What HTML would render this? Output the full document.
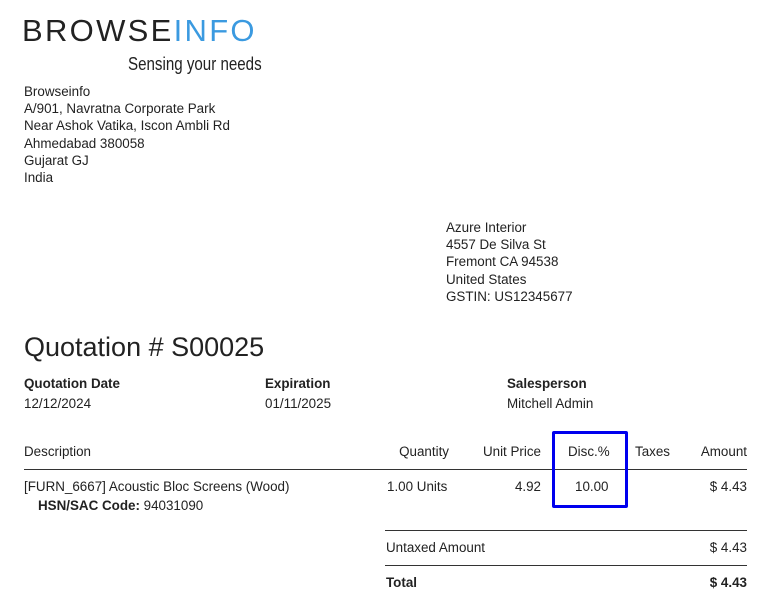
<!DOCTYPE html>
<html><head><meta charset="utf-8"><style>
body{margin:0;width:762px;height:608px;background:#fff;font-family:"Liberation Sans",sans-serif;color:#222;position:relative;overflow:hidden}
.a{position:absolute;white-space:nowrap;font-size:13.4px;line-height:17px}
.b{font-weight:bold}
.r{text-align:right}
.line{position:absolute;height:1px;background:#333}
</style></head><body>
<div class="a" style="left:22px;top:13px;font-size:31px;line-height:36px;letter-spacing:2.3px;color:#222">BROWSE<span style="color:#3b9ae0">INFO</span></div>
<div class="a" style="left:128px;top:54px;font-size:18px;line-height:20px;transform:scaleX(0.84);transform-origin:left">Sensing your needs</div>
<div class="a" style="left:24px;top:83px;line-height:17.2px">Browseinfo<br>A/901, Navratna Corporate Park<br>Near Ashok Vatika, Iscon Ambli Rd<br>Ahmedabad 380058<br>Gujarat GJ<br>India</div>
<div class="a" style="left:446px;top:219px;line-height:17.2px">Azure Interior<br>4557 De Silva St<br>Fremont CA 94538<br>United States<br>GSTIN: US12345677</div>
<div class="a" style="left:24px;top:330px;font-size:27px;line-height:34px">Quotation # S00025</div>
<div class="a b" style="left:24px;top:375px">Quotation Date</div>
<div class="a" style="left:24px;top:395px">12/12/2024</div>
<div class="a b" style="left:265px;top:375px">Expiration</div>
<div class="a" style="left:265px;top:395px">01/11/2025</div>
<div class="a b" style="left:507px;top:375px">Salesperson</div>
<div class="a" style="left:507px;top:395px">Mitchell Admin</div>
<div class="a" style="left:24px;top:443px">Description</div>
<div class="a r" style="left:380px;width:69px;top:443px">Quantity</div>
<div class="a r" style="left:460px;width:81px;top:443px">Unit Price</div>
<div class="a" style="left:568px;top:443px">Disc.%</div>
<div class="a" style="left:635px;top:443px">Taxes</div>
<div class="a r" style="left:680px;width:67px;top:443px">Amount</div>
<div class="line" style="left:24px;width:723px;top:469px"></div>
<div class="a" style="left:24px;top:478px">[FURN_6667] Acoustic Bloc Screens (Wood)</div>
<div class="a" style="left:38px;top:497px"><b>HSN/SAC Code:</b> 94031090</div>
<div class="a" style="left:387px;top:478px">1.00 Units</div>
<div class="a r" style="left:460px;width:81px;top:478px">4.92</div>
<div class="a" style="left:575px;top:478px">10.00</div>
<div class="a r" style="left:680px;width:67px;top:478px">$ 4.43</div>
<div style="position:absolute;left:552px;top:431px;width:70px;height:71px;border:3px solid #0000ee;border-radius:2px"></div>
<div class="line" style="left:385px;width:362px;top:530px"></div>
<div class="a" style="left:386px;top:539px">Untaxed Amount</div>
<div class="a r" style="left:680px;width:67px;top:539px">$ 4.43</div>
<div class="line" style="left:385px;width:362px;top:565px"></div>
<div class="a b" style="left:386px;top:574px">Total</div>
<div class="a b r" style="left:680px;width:67px;top:574px">$ 4.43</div>
</body></html>
